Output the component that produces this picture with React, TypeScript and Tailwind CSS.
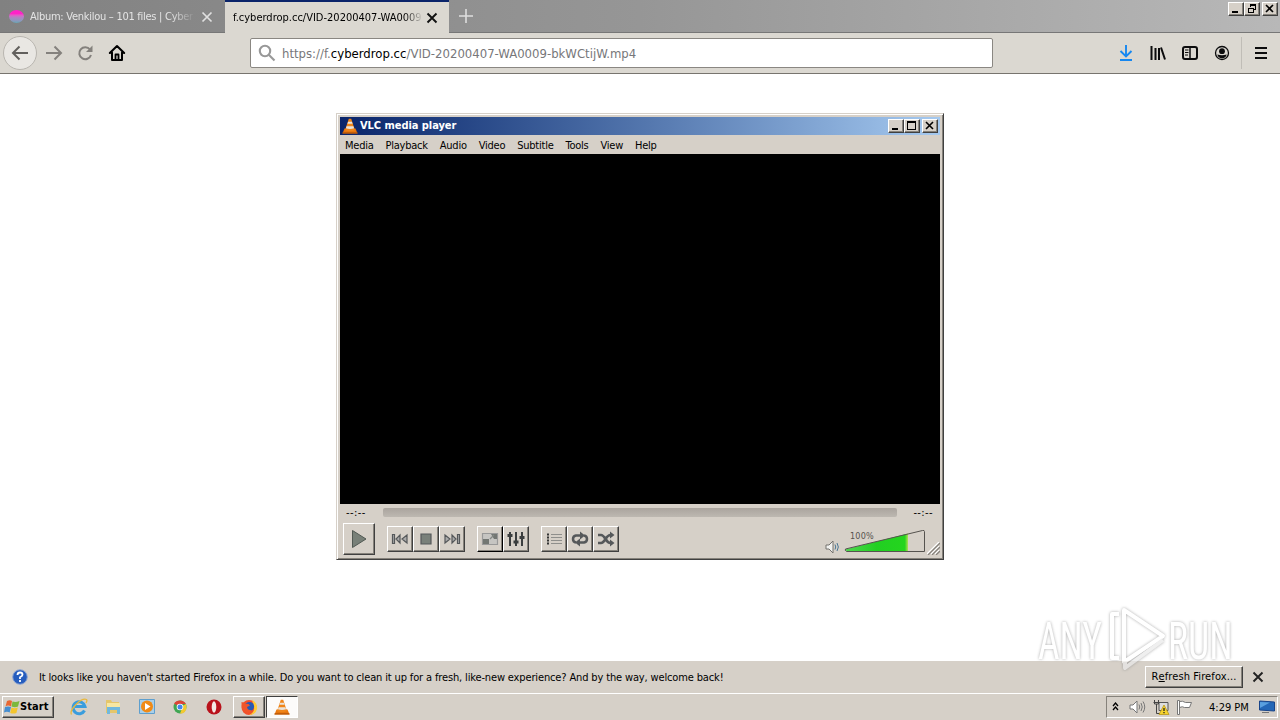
import type { ReactNode } from "react";
import clsx from "clsx";

const menus = ["Media", "Playback", "Audio", "Video", "Subtitle", "Tools", "View", "Help"];

const raised =
  "border border-t-white border-l-white border-r-[#404040] border-b-[#404040] bg-[#d6d0c8] shadow-[inset_-1px_-1px_0_#86827b]";

function WinButton({ kind, className }: { kind: "min" | "max" | "restore" | "close"; className?: string }) {
  return (
    <div className={clsx("h-[14px] w-4 shrink-0", raised, className)}>
      <svg width="14" height="12" viewBox="0 0 14 12" fill="none" stroke="#000" shapeRendering="crispEdges">
        {kind === "min" && <path d="M3 9h6" strokeWidth="2" />}
        {kind === "max" && <path d="M2.5 2v7.5h8V2M2 2h9" strokeWidth="1.4" />}
        {kind === "restore" && <path d="M5.5 4V1.5h5v5H9M5 2h6M3.5 5v4.5h5V5M3 5h6" />}
        {kind === "close" && <path d="M3 2l7 7M10 2l-7 7" strokeWidth="1.6" shapeRendering="auto" />}
      </svg>
    </div>
  );
}

function Cone({ size }: { size: number }) {
  return (
    <svg width={size} height={size} viewBox="0 0 16 16" className="shrink-0">
      <path d="M2.5 10.500h11l2 4.900H.5z" fill="#e8750d" />
      <path d="M6.800.8h2.400l3.800 11.400q-5 2-10 0z" fill="#f08519" />
      <path d="M6.100 3.800h3.800l.7 2H5.400zM4.600 8.300h6.800l.7 2q-4.100 1.500-8.200 0z" fill="#e9e4dc" />
      <path d="M.5 14.300h15v1.200H.5z" fill="#b45508" />
    </svg>
  );
}

function ControlButton({ children, dark }: { children: ReactNode; dark?: boolean }) {
  return (
    <div className={clsx("flex h-[26px] w-[26px] items-center justify-center", raised, dark && "border-r-black border-b-black")}>
      <svg width="20" height="20" viewBox="0 0 20 20" className="shrink-0" fill="none" stroke="#55585a" strokeWidth="1.2">
        {children}
      </svg>
    </div>
  );
}

function TabBar() {
  return (
    <div className="flex h-[33px] bg-linear-to-r from-[#818181] via-[#969696] to-[#b8b8b8]">
      <div className="flex w-[225px] items-center border-b border-[#777] pl-[9px] text-[#e4e4e4]">
        <div className="h-[13px] w-[15px] shrink-0 rounded-[50%] bg-linear-to-b from-[#ff22c8] from-30% via-[#b47fc4] via-55% to-[#65a6b5] blur-[0.5px]" />
        <div className="mt-[2px] ml-[6px] w-[166px] whitespace-nowrap tracking-[-0.27px] mask-r-from-85% mask-r-to-100%">
          Album: Venkilou – 101 files | Cyber
        </div>
        <svg width="12" height="12" viewBox="0 0 12 12" className="mt-px ml-[5px]" stroke="#e0e0e0" strokeWidth="1.7">
          <path d="M1.500 1.500l9 9M10.500 1.500l-9 9" />
        </svg>
      </div>
      <div className="flex w-[224px] items-center border-t-2 border-[#0a246a] bg-[#dbd8d1] pl-2">
        <div className="w-[190px] whitespace-nowrap mask-r-from-90% mask-r-to-100%">
          f.cyberdrop.cc/VID-20200407-WA0009
        </div>
        <svg width="12" height="12" viewBox="0 0 12 12" className="ml-[3px]" stroke="#111" strokeWidth="1.9">
          <path d="M1.500 1.500l9 9M10.500 1.500l-9 9" />
        </svg>
      </div>
      <div className="flex flex-1 justify-between border-b border-[#777]">
        <svg width="16" height="16" viewBox="0 0 16 16" className="mt-2 ml-[9px]" stroke="#dedede" strokeWidth="1.6">
          <path d="M8 1v14M1 8h14" />
        </svg>
        <div className="mt-[2px] mr-[2px] flex">
          <WinButton kind="min" />
          <WinButton kind="restore" />
          <WinButton kind="close" className="ml-[2px]" />
        </div>
      </div>
    </div>
  );
}

function NavBar() {
  return (
    <div className="flex h-[41px] items-center border-b border-[#77746e] bg-[#dbd8d1]">
      <div className="ml-[3px] flex h-[34px] w-[34px] items-center justify-center rounded-full border border-[#b9b6b0] bg-[#e9e7e3]">
        <svg width="18" height="16" viewBox="0 0 18 16" fill="none" stroke="#62605d" strokeWidth="2">
          <path d="M17 8H2M8.500 1.500L2 8l6.500 6.500" />
        </svg>
      </div>
      <svg width="18" height="16" viewBox="0 0 18 16" className="ml-[8px]" fill="none" stroke="#84817d" strokeWidth="2">
        <path d="M1 8h15M9.500 1.500L16 8l-6.500 6.500" />
      </svg>
      <svg width="16" height="16" viewBox="0 0 16 16" className="ml-[14px]" fill="none" stroke="#84817d" strokeWidth="2">
        <path d="M13 4.500A6 6 0 1 0 14 10" />
        <path d="M15.500 .5v6.500H9z" fill="#84817d" stroke="none" />
      </svg>
      <svg width="18" height="18" viewBox="0 0 18 18" className="ml-[15px]" fill="none" stroke="#000" strokeWidth="2" strokeLinejoin="round" strokeLinecap="round">
        <path d="M1.800 9L9 2l7.200 7M4 8.500V16h10V8.500" />
        <path d="M7.500 15v-4.500h3V15" strokeWidth="1.800" />
      </svg>
      <div className="ml-[124px] flex h-[30px] w-[743px] items-center rounded-[2px] border border-[#8a8782] bg-white text-[13px] text-[#77777a]">
        <svg width="18" height="18" viewBox="0 0 18 18" className="ml-[7px]" fill="none" stroke="#989898" strokeWidth="2.100">
          <circle cx="7" cy="7" r="5.200" />
          <path d="M10.800 10.800L16.500 16.500" />
        </svg>
        <div className="mt-px ml-[6px] whitespace-nowrap">
          https://f.<span className="text-black">cyberdrop.cc</span>/VID-20200407-WA0009-bkWCtijW.mp4
        </div>
      </div>
      <div className="ml-[124px] flex h-full items-center">
        <svg width="18" height="18" viewBox="0 0 18 18" fill="none" stroke="#1687f0" strokeWidth="1.900">
          <path d="M9 1v11.500M3.500 7L9 12.500 14.500 7M3 16h12" />
        </svg>
        <svg width="16" height="16" viewBox="0 0 16 16" className="ml-[15px]" fill="none" stroke="#0c0c0d" strokeWidth="2">
          <path d="M1.500 1v14M5.500 3v12M9 3v12M11 2.500L15 14.500" />
        </svg>
        <svg width="18" height="18" viewBox="0 0 18 18" className="ml-[15px]" fill="none" stroke="#0c0c0d" strokeWidth="2">
          <rect x="2" y="3" width="14" height="12" rx="2" />
          <path d="M9 3v12" strokeWidth="1.500" />
          <path d="M4 6h3.500M4 8.500h3.500M4 11h3" strokeWidth="1" />
        </svg>
        <svg width="16" height="16" viewBox="0 0 16 16" className="ml-[15px]">
          <circle cx="8" cy="8" r="6.500" fill="none" stroke="#0c0c0d" strokeWidth="1.300" />
          <circle cx="8" cy="6.200" r="2.900" fill="#0c0c0d" />
          <path d="M3.300 9.500q4.700 1.500 9.400 0-.7 3.700-4.700 3.700t-4.700-3.700" fill="#0c0c0d" />
        </svg>
        <div className="ml-[11px] h-8 w-px bg-[#c0bdb7]" />
        <svg width="14" height="14" viewBox="0 0 14 14" className="ml-[12px]" stroke="#0c0c0d" strokeWidth="2">
          <path d="M1 2h12M1 7h12M1 12h12" />
        </svg>
      </div>
    </div>
  );
}

function Player() {
  return (
    <div className="mx-auto mt-[39px] flex h-[447px] w-[608px] flex-col border border-t-[#d6d0c8] border-l-[#d6d0c8] border-r-[#404040] border-b-[#404040] bg-[#d6d0c8] p-[3px] shadow-[inset_1px_1px_0_#fff,inset_-1px_-1px_0_#86827b]">
      <div className="flex h-[18px] shrink-0 items-center bg-linear-to-r from-[#0a246a] to-[#a6caf0] pr-[2px] pl-[2px]">
        <Cone size={16} />
        <span className="ml-[2px] flex-1 tracking-[-0.05px] font-bold whitespace-nowrap text-white">VLC media player</span>
        <WinButton kind="min" />
        <WinButton kind="max" />
        <WinButton kind="close" className="ml-[2px]" />
      </div>
      <div className="flex h-[19px] shrink-0 items-center gap-[12px] pt-[2px] pl-[5px] tracking-[-0.24px]">
        {menus.map((m) => (
          <span key={m}>{m}</span>
        ))}
      </div>
      <div className="h-[350px] shrink-0 bg-black" />
      <div className="flex h-[17px] shrink-0 items-center pr-[7px] pl-[6px]">
        <span className="w-[37px] tracking-[0.4px]">--:--</span>
        <div className="h-[9px] w-[514px] rounded-[2px] bg-linear-to-b from-[#aaa49e] to-[#bdb8b1]" />
        <span className="ml-auto tracking-[0.4px]">--:--</span>
      </div>
      <div className="flex h-[35px] shrink-0 items-center pl-[2px]">
        <div className={clsx("ml-px flex h-8 w-8 items-center justify-center", raised)}>
          <svg width="18" height="20" viewBox="0 0 18 20">
            <path d="M2.500 1.500L16 10 2.500 18.500z" fill="#788078" stroke="#515953" />
          </svg>
        </div>
        <div className="ml-3 flex">
          <ControlButton>
            <path d="M2.500 5.500v9h2v-9zM10 6v8l-4-4zM17 6v8l-5-4z" fill="#aaa" />
          </ControlButton>
          <ControlButton>
            <path d="M5 5h10v10H5z" fill="#79807a" />
          </ControlButton>
          <ControlButton>
            <path d="M17.500 5.500v9h-2v-9zM3 6v8l5-4zM10 6v8l4-4z" fill="#aaa" />
          </ControlButton>
        </div>
        <div className="ml-3 flex">
          <ControlButton dark>
            <path d="M2.500 4.500h15v11h-15z" fill="#c6c5c2" stroke="#999" />
            <path d="M3 10h6v5H3zM11 5h6v5h-3z" fill="#737773" stroke="none" />
            <path d="M10 10l4-4" stroke="#858885" />
          </ControlButton>
          <ControlButton>
            <path d="M4 3v14M10 3v14M16 3v14" stroke="#3b3e3f" strokeWidth="2" />
            <path d="M1.500 6.500h5M7.500 13h5M13.500 8.500h5" stroke="#3b3e3f" strokeWidth="3" />
          </ControlButton>
        </div>
        <div className="ml-3 flex">
          <ControlButton>
            <path d="M7 5.500h11M7 8.500h11M7 11.500h11M7 14.500h11" stroke="#8f8f8c" />
            <path d="M3 5.500h2M3 8.500h2M3 11.500h2M3 14.500h2" stroke="#333" strokeWidth="2" />
          </ControlButton>
          <ControlButton>
            <path d="M6 13.500Q3 13 3 10t3-3.500h5M14 6.500q3 .5 3 3.500t-3 3.500h-5" strokeWidth="2.500" />
            <path d="M10 2.500l5 4-5 4zM10 9.500l-5 4 5 4z" fill="#55585a" stroke="none" />
          </ControlButton>
          <ControlButton>
            <path d="M2 6h3q2 0 4.500 4t5 4H16M2 14h3q2 0 4.500-4t5-4H16" strokeWidth="2.600" />
            <path d="M14 2.500L18.500 6 14 9.500zM14 10.500l4.500 3.500-4.500 3.500z" fill="#55585a" stroke="none" />
          </ControlButton>
        </div>
        <svg width="15" height="14" viewBox="0 0 15 14" className="mt-4 ml-[206px]" fill="none">
          <path d="M1 5h3l4-4v12L4 9H1z" fill="#f2f2f0" stroke="#74726f" />
          <path d="M10 4.500q1.500 2.500 0 5M12 3q2.700 4 0 8" stroke="#4a7795" />
        </svg>
        <div className="relative mt-[5px] ml-[4px] h-[24px] w-[82px]">
          <svg width="82" height="24" viewBox="0 0 82 24" fill="none">
            <path d="M1 20.500L64 4.500v18H3z" fill="url(#volume)" />
            <path d="M1.500 20L78.500 1.500q2-.5 2 1v20H2.500q-2-1.200-1-2.500z" stroke="#56534f" />
            <defs>
              <linearGradient id="volume">
                <stop stopColor="#50d850" />
                <stop offset=".5" stopColor="#22cf22" />
                <stop offset=".95" stopColor="#24d51e" />
                <stop offset="1" stopColor="#b1df56" />
              </linearGradient>
            </defs>
          </svg>
          <span className="absolute top-[1px] left-[6px] text-[9px] leading-[12px] tracking-[0.2px] text-[#55524e]">100%</span>
        </div>
        <svg width="13" height="13" viewBox="0 0 13 13" className="mt-[20px] ml-[1px]" strokeWidth="1.300">
          <path d="M0 12L12 0M4 12l8-8M8 12l4-4" stroke="#fff" />
          <path d="M1 13L13 1M5 13l8-8M9 13l4-4" stroke="#86827b" />
        </svg>
      </div>
    </div>
  );
}

function Watermark() {
  return (
    <div className="absolute top-[606px] left-[1038px] flex h-[68px] w-[200px] items-center text-white opacity-70 drop-shadow-[0_0_1.500px_#8a8a8a]">
      <div className="w-[68px] pt-[3px]">
        <span className="inline-block origin-left scale-x-[0.735] font-['Roboto'] text-[51px] leading-none">ANY</span>
      </div>
      <svg width="62" height="68" viewBox="0 0 62 68" className="shrink-0" fill="none" stroke="#fff" strokeWidth="4" strokeLinejoin="round">
        <path d="M18 4L57 30 18 56zM13 8H6v44h7" />
        <path d="M57 34L19 62v-6" stroke="#e9e9e9" />
      </svg>
      <div className="w-[68px] pt-[3px]">
        <span className="inline-block origin-left scale-x-[0.740] font-['Roboto'] text-[51px] leading-none">RUN</span>
      </div>
    </div>
  );
}

function Notification() {
  return (
    <div className="flex h-8 items-center bg-[#d6d0c8] pl-3">
      <svg width="16" height="16" viewBox="0 0 16 16">
        <circle cx="8" cy="8" r="7.300" fill="#265dbe" stroke="#8fa6d2" />
        <path d="M5.500 6Q5.500 3.500 8 3.500t2.500 2.300Q10.500 7.200 8 8.300V10M8 11v2" fill="none" stroke="#fff" strokeWidth="1.800" />
      </svg>
      <span className="mt-px ml-[11px] tracking-[-0.142px] whitespace-nowrap">
        It looks like you haven't started Firefox in a while. Do you want to clean it up for a fresh, like-new experience? And by the way, welcome back!
      </span>
      <div className={clsx("mr-[9px] mb-px ml-auto flex h-[22px] w-[98px] items-center justify-center tracking-[0.1px] whitespace-nowrap", raised)}>
        R<u>e</u>fresh Firefox...
      </div>
      <svg width="12" height="12" viewBox="0 0 12 12" className="mr-4" stroke="#222" strokeWidth="1.900">
        <path d="M1.500 1.500l9 9M10.500 1.500l-9 9" />
      </svg>
    </div>
  );
}

function Taskbar() {
  return (
    <div className="flex h-[27px] items-center border-t border-white bg-[#d6d0c8]">
      <div className={clsx("ml-[2px] flex h-[22px] w-[52px] items-center font-bold", raised)}>
        <svg width="16" height="16" viewBox="0 0 16 16" className="ml-px shrink-0">
          <path d="M3 2q3-1.500 5 0L7 7.500Q4 5.500 1.500 7.500z" fill="#e86732" />
          <path d="M8.500 2.500q3 1.200 7-.5L14 7.500q-3 1.500-6.500 0z" fill="#7cb83c" />
          <path d="M1 8q3-1.200 6 0l-1.300 5.500Q3 12 0 13.500z" fill="#468ed0" />
          <path d="M7.500 8.500q3 1.300 6.300 0l-1.400 5.500q-3 1.200-6.200 0z" fill="#f4c52e" />
        </svg>
        <span className="tracking-[0.1px] whitespace-nowrap">Start</span>
      </div>
      <svg width="18" height="18" viewBox="0 0 18 18" className="ml-[16px]" fill="none">
        <path d="M14.500 12.500A6 6 0 1 1 15 8.500H5" stroke="#3a9ddd" strokeWidth="3" />
        <path d="M1.500 16.500Q-.5 13 6 6.500T16.500 1.500q1 1-.5 3.500" stroke="#e9b83b" strokeWidth="1.300" />
      </svg>
      <svg width="18" height="18" viewBox="0 0 18 18" className="ml-4">
        <path d="M2 2h5l1 2h7v11H2z" fill="#e5c66b" />
        <path d="M3 5h13v5H3z" fill="#f7e7a2" />
        <path d="M3 9h13v7h-3v-4H6v4H3z" fill="#71b8dd" />
      </svg>
      <svg width="18" height="18" viewBox="0 0 18 18" className="ml-4">
        <path d="M1.500 1.500h15v14h-15z" fill="#a9cfe9" stroke="#5e9fce" />
        <circle cx="9" cy="8.500" r="6" fill="#f08a16" />
        <path d="M7 5l5.500 3.500L7 12z" fill="#fff" />
      </svg>
      <svg width="16" height="16" viewBox="0 0 16 16" className="ml-[16px]">
        <circle cx="8" cy="8" r="6.500" fill="#40a653" />
        <path d="M8 8L2 4.500Q4 1.500 8 1.500T14 5H8z" fill="#dc4437" />
        <path d="M8 8l6-3q1.500 5-1.500 8.200Q10.500 15 8 14.500l2-5z" fill="#f3c92f" />
        <circle cx="8" cy="8" r="3.300" fill="#fff" />
        <circle cx="8" cy="8" r="2.500" fill="#4386ec" />
      </svg>
      <svg width="18" height="16" viewBox="0 0 18 16" className="ml-[17px]">
        <ellipse cx="9" cy="8" rx="7.500" ry="7.500" fill="#b9121b" />
        <ellipse cx="9" cy="8" rx="2.300" ry="5.700" fill="#f4e8e4" />
      </svg>
      <div className={clsx("ml-[10px] flex h-[22px] w-[32px] items-center justify-center", raised)}>
        <svg width="18" height="18" viewBox="0 0 18 18">
          <circle cx="9" cy="9.500" r="7.500" fill="#f2502a" />
          <path d="M12 1.500q6 4 5 9.500-1.500 6-8 6 6-3 5-8-1-3-2-7.500z" fill="#ffcb35" />
          <circle cx="9.500" cy="8.500" r="4.600" fill="#2559b5" />
          <path d="M1.500 4q2 0 3 1.500l4 .5 1.500 1.500-3 1.500q0 3 5 3.500-2 3-6 2-5-2-4.500-10.500z" fill="#f0552a" />
        </svg>
      </div>
      <div className="ml-px flex h-[22px] w-[32px] items-center justify-center border border-t-[#404040] border-l-[#404040] border-r-white border-b-white bg-[#fcfbfa]">
        <Cone size={16} />
      </div>
      <div className="mr-[2px] ml-auto flex h-[22px] w-[172px] items-center border border-t-[#86827b] border-l-[#86827b] border-r-white border-b-white">
        <svg width="7" height="9" viewBox="0 0 7 9" className="mb-[2px] ml-[5px]" fill="none" stroke="#000" strokeWidth="1.300">
          <path d="M1 4l2.500-3L6 4M1 8l2.500-3L6 8" />
        </svg>
        <svg width="17" height="16" viewBox="0 0 17 16" className="ml-[10px]" fill="none" stroke="#777">
          <path d="M1 6h3l4-4v12l-4-4H1z" fill="#fff" />
          <path d="M10 5.500q1.500 2.500 0 5M12 4q2.500 4 0 8M14 2.500q3.500 5.500 0 11" />
        </svg>
        <svg width="18" height="18" viewBox="0 0 18 18" className="ml-[6px]" fill="none" stroke="#555">
          <path d="M7 4.500h9v8H7z" fill="#ddd" />
          <path d="M2.500 2v4h4V2M4.500 6v9.500h4M1.500 4.500h6" stroke="#444" />
          <path d="M12 7l5 9.500H7z" fill="#f7d32c" stroke="#b99716" strokeWidth=".8" />
          <path d="M12 10v3M12 14v1.200" stroke="#222" strokeWidth="1.300" />
        </svg>
        <svg width="17" height="17" viewBox="0 0 17 17" className="ml-[6px]" fill="#fff" stroke="#777">
          <path d="M1.500 1.500h2v14h-2zM3.500 2.500q3-1 6 1h6l-2 5h-5q-2-1.500-5 0z" />
        </svg>
        <span className="mt-px ml-4 whitespace-nowrap">4:29 PM</span>
        <svg width="16" height="14" viewBox="0 0 16 14" className="mr-[2px] ml-auto">
          <path d="M.5 1l15 1v9l-15-1z" fill="#2467b7" stroke="#19458a" />
          <path d="M1 2l10 .5L1 8z" fill="#5aa0df" />
          <path d="M3 12.500h7" stroke="#777" />
        </svg>
      </div>
    </div>
  );
}

export default function App() {
  return (
    <div className="relative flex h-[720px] w-[1280px] flex-col overflow-hidden bg-white font-['DejaVu_Sans_Condensed','DejaVu_Sans',sans-serif] text-[11px] leading-[14px] text-black [font-stretch:condensed]">
      <TabBar />
      <NavBar />
      <main className="flex-1">
        <Player />
      </main>
      <Notification />
      <Taskbar />
      <Watermark />
    </div>
  );
}
